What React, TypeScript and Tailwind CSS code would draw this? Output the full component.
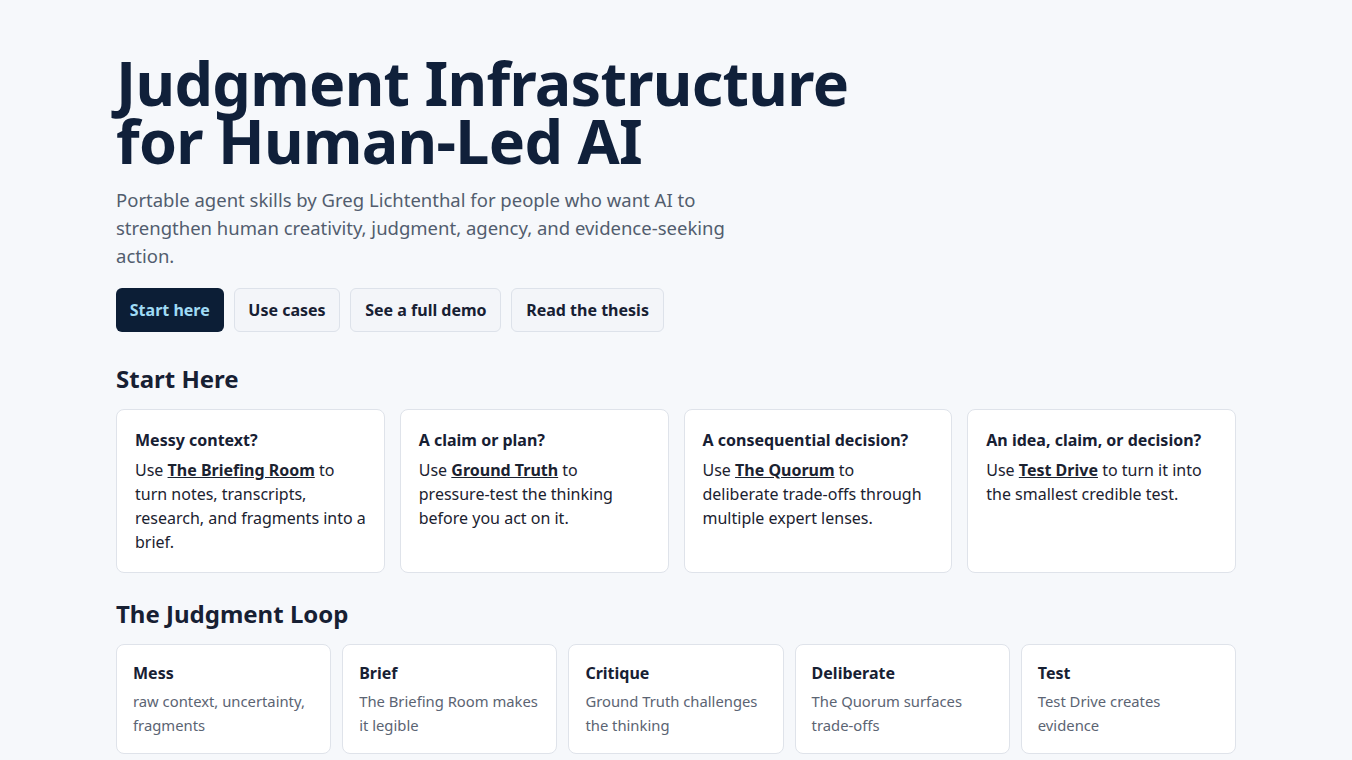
const startCards = [
	{
		title: "Messy context?",
		skill: "The Briefing Room",
		rest: "to turn notes, transcripts, research, and fragments into a brief.",
	},
	{
		title: "A claim or plan?",
		skill: "Ground Truth",
		rest: "to pressure-test the thinking before you act on it.",
	},
	{
		title: "A consequential decision?",
		skill: "The Quorum",
		rest: "to deliberate trade-offs through multiple expert lenses.",
	},
	{
		title: "An idea, claim, or decision?",
		skill: "Test Drive",
		rest: "to turn it into the smallest credible test.",
	},
];

const loop = [
	{ title: "Mess", body: "raw context, uncertainty, fragments" },
	{ title: "Brief", body: "The Briefing Room makes it legible" },
	{ title: "Critique", body: "Ground Truth challenges the thinking" },
	{ title: "Deliberate", body: "The Quorum surfaces trade-offs" },
	{ title: "Test", body: "Test Drive creates evidence" },
];

const navLinks = ["Use cases", "See a full demo", "Read the thesis"];

export default function App() {
	return (
		<div
			className="min-h-screen bg-[#f6f8fb] text-[#172033]"
			style={{ fontFamily: '"Noto Sans", "Open Sans", sans-serif' }}
		>
			<main className="mx-auto w-[1120px] pt-[54px] pb-12">
				<h1 className="text-[61px] font-bold leading-[58px] tracking-[-0.7px] text-[#10203a]">
					Judgment Infrastructure
					<br />
					for Human-Led AI
				</h1>
				<p className="mt-4 max-w-[640px] text-[18.5px] leading-[28px] text-[#525d6e]">
					Portable agent skills by Greg Lichtenthal for people who want AI to
					strengthen human creativity, judgment, agency, and evidence-seeking
					action.
				</p>
				<div className="mt-[18px] flex gap-[10px]">
					<a
						href="#start"
						className="flex h-[44px] items-center rounded-md bg-[#0c1e36] px-[13.8px] text-base font-bold text-[#a0dbf5]"
					>
						Start here
					</a>
					{navLinks.map((label) => (
						<a
							key={label}
							href="#"
							className="flex h-[44px] items-center rounded-md border border-[#dde2ea] bg-[#f3f5f9] px-[13.8px] text-base font-bold text-[#172033]"
						>
							{label}
						</a>
					))}
				</div>

				<h2 id="start" className="mt-[31px] text-2xl leading-8 font-bold text-[#172033]">
					Start Here
				</h2>
				<div className="mt-[14px] grid grid-cols-4 gap-[15px]">
					{startCards.map((card) => (
						<div
							key={card.title}
							className="rounded-lg border border-[#dfe3ea] bg-white py-[18px] pr-[17px] pl-[18px]"
						>
							<h3 className="text-base leading-6 font-bold text-[#172033]">
								{card.title}
							</h3>
							<p className="mt-[6px] text-base leading-6 text-[#1b2230]">
								Use{" "}
								<a href="#" className="font-bold underline">
									{card.skill}
								</a>{" "}
								{card.rest}
							</p>
						</div>
					))}
				</div>

				<h2 className="mt-[25px] text-2xl leading-8 font-bold text-[#172033]">
					The Judgment Loop
				</h2>
				<div className="mt-[14px] grid grid-cols-5 gap-[11px]">
					{loop.map((step) => (
						<div
							key={step.title}
							className="rounded-lg border border-[#dfe3ea] bg-white p-4"
						>
							<h3 className="text-base leading-6 font-bold text-[#172033]">
								{step.title}
							</h3>
							<p className="mt-1 text-[14.8px] leading-6 text-[#5b6473]">
								{step.body}
							</p>
						</div>
					))}
				</div>
			</main>
		</div>
	);
}
